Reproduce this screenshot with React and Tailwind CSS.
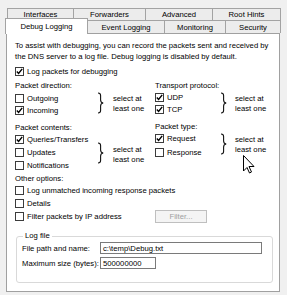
import React from "react";

function Check({ checked }) {
  return (
    <span className="w-[9px] h-[9px] border border-[#3c3c3c] bg-white flex items-center justify-center shrink-0">
      {checked && (
        <svg width="7" height="7" viewBox="0 0 7 7">
          <path d="M0.8 3.6 L2.6 5.5 L6.2 0.9" stroke="#000" strokeWidth="1.4" fill="none" />
        </svg>
      )}
    </span>
  );
}

function Row({ checked, label, className = "" }) {
  return (
    <div className={"h-[12px] flex items-center gap-[3px] " + className}>
      <Check checked={checked} />
      <span className="whitespace-nowrap">{label}</span>
    </div>
  );
}

function Brace() {
  return (
    <svg width="7" height="22" viewBox="0 0 7 22" className="shrink-0">
      <path d="M1 1 Q3.6 1 3.6 3.5 L3.6 8 Q3.6 10.6 6.2 11 Q3.6 11.4 3.6 14 L3.6 18.5 Q3.6 21 1 21" stroke="#111" strokeWidth="1.1" fill="none" />
    </svg>
  );
}

function SelectNote() {
  return (
    <div className="leading-[10px] whitespace-nowrap">
      select at
      <br />
      least one
    </div>
  );
}

export default function App() {
  return (
    <div className="w-[287px] h-[295px] bg-[#f0f0f0] relative overflow-hidden font-['Liberation_Sans',Arial,sans-serif] text-[7.7px] text-black leading-[11px]">
      {/* Tab row 1 */}
      <div className="flex pt-[8px] pl-[7px]">
        {[
          ["Interfaces", "w-[66px]"],
          ["Forwarders", "w-[72px]"],
          ["Advanced", "w-[67px]"],
          ["Root Hints", "w-[69px] border-r"],
        ].map(([t, w]) => (
          <div key={t} className={"h-[12px] border-t border-l border-[#a3a3a3] bg-[#ececec] flex items-center justify-center " + w}>
            {t}
          </div>
        ))}
      </div>
      {/* Tab row 2 */}
      <div className="flex pl-[5px] h-[13px] relative z-10">
        <div className="w-[83px] h-[16px] -mt-[2px] bg-white border-t border-l border-r border-[#a3a3a3] flex items-center justify-center pb-[1px]">
          Debug Logging
        </div>
        <div className="w-[77px] h-[13px] border-t border-r border-[#a3a3a3] bg-[#ececec] flex items-center justify-center">
          Event Logging
        </div>
        <div className="w-[61px] h-[13px] border-t border-r border-[#a3a3a3] bg-[#ececec] flex items-center justify-center">
          Monitoring
        </div>
        <div className="w-[55px] h-[13px] border-t border-r border-[#a3a3a3] bg-[#ececec] flex items-center justify-center">
          Security
        </div>
      </div>
      {/* Panel */}
      <div className="ml-[6px] w-[274px] h-[259px] bg-white border border-[#a0a0a0] pl-[8px] pt-[6px]">
        <div className="leading-[11px] whitespace-nowrap">
          To assist with debugging, you can record the packets sent and received by
          <br />
          the DNS server to a log file. Debug logging is disabled by default.
        </div>
        <Row checked label="Log packets for debugging" className="mt-[3px]" />

        <div className="flex mt-[2px]">
          {/* left column */}
          <div className="w-[140px]">
            <div className="h-[12px] flex items-center">Packet direction:</div>
            <div className="flex mt-[1px]">
              <div className="w-[82px]">
                <Row label="Outgoing" />
                <Row checked label="Incoming" />
              </div>
              <Brace />
              <div className="ml-[9px] mt-[2px]">
                <SelectNote />
              </div>
            </div>
            <div className="h-[12px] flex items-center mt-[5px]">Packet contents:</div>
            <div className="flex">
              <div className="w-[82px] flex flex-col gap-[1px]">
                <Row checked label="Queries/Transfers" />
                <Row label="Updates" />
                <Row label="Notifications" />
              </div>
              <div className="mt-[9px]">
                <Brace />
              </div>
              <div className="ml-[9px] mt-[12px]">
                <SelectNote />
              </div>
            </div>
          </div>
          {/* right column */}
          <div>
            <div className="h-[12px] flex items-center">Transport protocol:</div>
            <div className="flex">
              <div className="w-[65px]">
                <Row checked label="UDP" />
                <Row checked label="TCP" />
              </div>
              <div className="mt-[1px]">
                <Brace />
              </div>
              <div className="ml-[8px] mt-[3px]">
                <SelectNote />
              </div>
            </div>
            <div className="h-[12px] flex items-center mt-[5px]">Packet type:</div>
            <div className="flex">
              <div className="w-[65px] flex flex-col gap-[2px]">
                <Row checked label="Request" />
                <Row label="Response" />
              </div>
              <div className="mt-[1px]">
                <Brace />
              </div>
              <div className="ml-[8px] mt-[3px]">
                <SelectNote />
              </div>
            </div>
          </div>
        </div>

        <div className="h-[12px] flex items-center mt-[1px]">Other options:</div>
        <div className="flex flex-col gap-[1px]">
          <Row label="Log unmatched incoming response packets" />
          <Row label="Details" />
          <div className="flex items-center">
            <div className="w-[140px]">
              <Row label="Filter packets by IP address" />
            </div>
            <div className="w-[52px] h-[13px] border border-[#bfbfbf] bg-[#f4f4f4] text-[#a0a0a0] flex items-center justify-center">
              Filter...
            </div>
          </div>
        </div>

        <fieldset className="ml-[1px] w-[257px] h-[52px] mt-[8px] border border-[#d9d9d9] rounded-[3px] px-[5px]">
          <legend className="px-[2px] ml-[1px] leading-[10px]">Log file</legend>
          <div className="flex items-center mt-[1px]">
            <div className="w-[78px] whitespace-nowrap">File path and name:</div>
            <div className="w-[162px] h-[12px] border border-[#7a7a7a] bg-white flex items-center pl-[2px]">
              c:\temp\Debug.txt
            </div>
          </div>
          <div className="flex items-center mt-[3px]">
            <div className="w-[78px] whitespace-nowrap">Maximum size (bytes):</div>
            <div className="w-[56px] h-[12px] border border-[#7a7a7a] bg-white flex items-center pl-[2px]">
              500000000
            </div>
          </div>
        </fieldset>
      </div>

      {/* Mouse cursor overlay */}
      <svg className="absolute left-[243px] top-[155px]" width="12" height="19" viewBox="0 0 12 19">
        <path d="M0.5 0.5 L0.5 16 L4 12.5 L6.5 18 L8.5 17 L6 11.5 L11 11.5 Z" fill="#fff" stroke="#000" strokeWidth="1" strokeLinejoin="miter" />
      </svg>
    </div>
  );
}
